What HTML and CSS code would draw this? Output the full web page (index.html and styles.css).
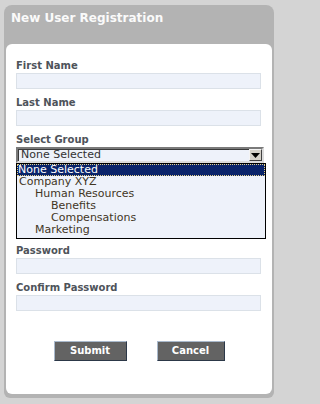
FILE: index.html
```html
<!DOCTYPE html>
<html>
<head>
<meta charset="utf-8">
<link rel="stylesheet" href="styles.css">
</head>
<body>
<div class="panel">
  <div class="header">New User Registration</div>
  <div class="body">
    <div class="field">
      <div class="label">First Name</div>
      <div class="input"></div>
    </div>
    <div class="field">
      <div class="label">Last Name</div>
      <div class="input"></div>
    </div>
    <div class="field">
      <div class="label">Select Group</div>
      <div class="select">
        <span class="select-text">None Selected</span>
        <span class="arrow"><svg width="9" height="5" viewBox="0 0 9 5"><path d="M0 0H9L4.5 5Z" fill="#000"/></svg></span>
      </div>
      <div class="list">
        <div class="opt sel">None Selected</div>
        <div class="opt">Company XYZ</div>
        <div class="opt l1">Human Resources</div>
        <div class="opt l2">Benefits</div>
        <div class="opt l2">Compensations</div>
        <div class="opt l1">Marketing</div>
      </div>
    </div>
    <div class="field">
      <div class="label">Password</div>
      <div class="input"></div>
    </div>
    <div class="field">
      <div class="label">Confirm Password</div>
      <div class="input"></div>
    </div>
    <div class="buttons">
      <div class="btn btn-submit">Submit</div>
      <div class="btn btn-cancel">Cancel</div>
    </div>
  </div>
</div>
</body>
</html>
```
FILE: styles.css
```css
html, body {
  margin: 0;
  padding: 0;
  background: #d4d4d4;
  font-family: "DejaVu Sans", Verdana, sans-serif;
}
body {
  width: 278px;
  height: 404px;
}
.panel {
  width: 266px;
  margin: 5px 4px 0 4px;
  background: #b3b3b3;
  border-radius: 8px 8px 6px 6px;
  padding: 0 2px 4px 2px;
}
.header {
  color: #fafafa;
  font-weight: bold;
  font-size: 12px;
  line-height: 16px;
  padding: 5px 0 18px 5px;
}
.body {
  background: #fff;
  border-radius: 6px;
  padding: 15px 0 33px 10px;
}
.field {
  margin-bottom: 7px;
}
.label {
  color: #4e535a;
  font-weight: bold;
  font-size: 10px;
  line-height: 14px;
  height: 14px;
}
.input {
  width: 243px;
  height: 14px;
  background: #eef2fa;
  border: 1px solid #dbe1e8;
}
.select {
  width: 244px;
  height: 12px;
  background: #eef2fa;
  border-style: solid;
  border-width: 2px;
  border-color: #7a7a7a #dcdcdc #dcdcdc #7a7a7a;
  box-shadow: inset 1px 1px 0 #3a3a3a;
  display: flex;
  align-items: center;
  justify-content: space-between;
  font-size: 11px;
  color: #333;
}
.select-text {
  padding-left: 3px;
  line-height: 12px;
}
.arrow {
  width: 13px;
  height: 12px;
  background: #d4d0c8;
  box-sizing: border-box;
  border: 1px solid;
  border-color: #f4f4f4 #404040 #404040 #f4f4f4;
  display: flex;
  align-items: center;
  justify-content: center;
}
.list {
  width: 248px;
  border: 1px solid #000;
  background: #eef2fa;
  padding-bottom: 2px;
  margin-bottom: -2px;
}
.opt {
  font-size: 11px;
  line-height: 12px;
  height: 12px;
  color: #42361f;
  padding-left: 2px;
  white-space: nowrap;
}
.opt.sel {
  background: #0a246a;
  color: #fff;
  outline: 1px dotted #e6d28a;
  outline-offset: -1px;
  padding-left: 1px;
}
.opt.l1 { padding-left: 18px; }
.opt.l2 { padding-left: 34px; }
.buttons {
  display: flex;
  justify-content: center;
  gap: 30px;
  margin-top: 30px;
  padding-right: 10px;
}
.btn {
  box-sizing: border-box;
  height: 20px;
  background: #636363;
  color: #fff;
  font-weight: bold;
  font-size: 10px;
  line-height: 18px;
  text-align: center;
  border: 1px solid;
  border-color: #a9b9cc #2c3848 #2c3848 #a9b9cc;
}
.btn-submit { width: 73px; }
.btn-cancel { width: 68px; }
```
